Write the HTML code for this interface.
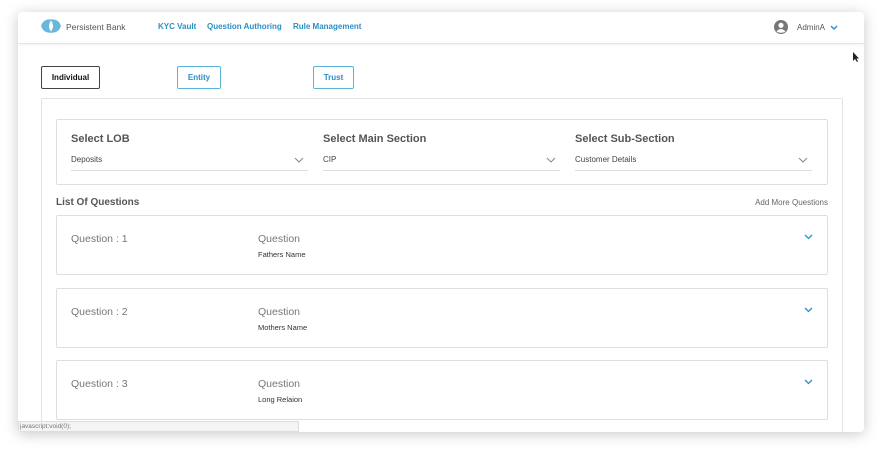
<!DOCTYPE html>
<html><head><meta charset="utf-8"><style>
*{box-sizing:border-box;margin:0;padding:0}
body{width:882px;height:456px;background:#fff;font-family:"Liberation Sans",Arial,sans-serif;position:relative;overflow:hidden}
.win{position:absolute;left:18px;top:12px;width:846px;height:420px;background:#fff;box-shadow:0 2px 14px rgba(0,0,0,.22);border-radius:4px;overflow:hidden}
.hdr{position:absolute;left:0;top:0;width:846px;height:32px;border-bottom:1px solid #e6e6e6;box-shadow:0 1px 3px rgba(0,0,0,.06)}
.a{position:absolute;white-space:nowrap}
.nav{color:#2a8fc4;font-weight:bold;font-size:8px;top:10px}
.tab{position:absolute;top:54px;height:23px;border:1px solid #5ab4d9;border-radius:2px;color:#2a8fc4;font-weight:bold;font-size:8px;text-align:center;line-height:21px}
.box{position:absolute;border:1px solid #dedede;border-radius:2px;background:#fff}
.lbl{font-size:11px;font-weight:bold;color:#555;top:13px}
.sel{position:absolute;top:35px;height:16px;border-bottom:1px solid #ddd;font-size:8px;color:#444}
.chev{position:absolute;right:4px;top:2px}
.q{font-size:10.5px;color:#777;top:17px}
.qt{font-size:10.5px;color:#777;top:17px;left:201px}
.qs{font-size:7.5px;color:#333;top:34px;left:201px}
</style></head><body>
<div class="win">
 <div class="hdr">
  <svg class="a" style="left:22px;top:6px" width="22" height="16" viewBox="0 0 22 16"><path d="M1 8 Q3 2 8 1.5 Q11 1 14 1.5 Q19 2 21 8 Q19 14 14 14.5 Q11 15 8 14.5 Q3 14 1 8Z" fill="#6ab7dc"/><path d="M11 2.5 Q15 8 11 13.5 Q7 8 11 2.5Z" fill="#fff"/></svg>
  <div class="a" style="left:48px;top:10px;font-size:8.5px;color:#555">Persistent Bank</div>
  <div class="a nav" style="left:140px">KYC Vault</div>
  <div class="a nav" style="left:189px">Question Authoring</div>
  <div class="a nav" style="left:275px">Rule Management</div>
  <svg class="a" style="left:756px;top:8px" width="14" height="14" viewBox="0 0 14 14"><circle cx="7" cy="7" r="7" fill="#777"/><circle cx="7" cy="5.3" r="2.6" fill="#fff"/><path d="M2.5 11.5 Q7 6.5 11.5 11.5 Q7 14 2.5 11.5Z" fill="#fff"/></svg>
  <div class="a" style="left:779px;top:11px;font-size:8px;color:#555">AdminA</div>
  <svg class="a" style="left:812px;top:13px" width="8" height="5" viewBox="0 0 8 5"><path d="M1 1 L4 4 L7 1" stroke="#2a8fc4" stroke-width="1.4" fill="none"/></svg>
 </div>
 <div class="tab" style="left:23px;width:59px;border-color:#444;color:#111">Individual</div>
 <div class="tab" style="left:159px;width:44px">Entity</div>
 <div class="tab" style="left:295px;width:41px">Trust</div>
 <div class="box" style="left:23px;top:86px;width:802px;height:340px;border-color:#e2e2e2">
  <div class="box" style="left:14px;top:20px;width:772px;height:66px">
   <div class="a lbl" style="left:14px">Select LOB</div>
   <div class="sel" style="left:14px;width:237px">Deposits<svg class="chev" width="10" height="6" viewBox="0 0 10 6"><path d="M1 1 L5 5 L9 1" stroke="#888" fill="none"/></svg></div>
   <div class="a lbl" style="left:266px">Select Main Section</div>
   <div class="sel" style="left:266px;width:237px">CIP<svg class="chev" width="10" height="6" viewBox="0 0 10 6"><path d="M1 1 L5 5 L9 1" stroke="#888" fill="none"/></svg></div>
   <div class="a lbl" style="left:518px">Select Sub-Section</div>
   <div class="sel" style="left:518px;width:237px">Customer Details<svg class="chev" width="10" height="6" viewBox="0 0 10 6"><path d="M1 1 L5 5 L9 1" stroke="#888" fill="none"/></svg></div>
  </div>
  <div class="a" style="left:14px;top:98px;font-size:10px;font-weight:bold;color:#555">List Of Questions</div>
  <div class="a" style="right:14px;top:99px;font-size:8px;color:#666">Add More Questions</div>
  <div class="box" style="left:14px;top:116px;width:772px;height:60px">
   <div class="a q" style="left:14px">Question : 1</div><div class="a qt">Question</div><div class="a qs">Fathers Name</div>
   <svg class="a" style="left:747px;top:18px" width="9" height="6" viewBox="0 0 9 6"><path d="M1 1 L4.5 4.5 L8 1" stroke="#2a8fc4" stroke-width="1.3" fill="none"/></svg>
  </div>
  <div class="box" style="left:14px;top:189px;width:772px;height:60px">
   <div class="a q" style="left:14px">Question : 2</div><div class="a qt">Question</div><div class="a qs">Mothers Name</div>
   <svg class="a" style="left:747px;top:18px" width="9" height="6" viewBox="0 0 9 6"><path d="M1 1 L4.5 4.5 L8 1" stroke="#2a8fc4" stroke-width="1.3" fill="none"/></svg>
  </div>
  <div class="box" style="left:14px;top:261px;width:772px;height:60px">
   <div class="a q" style="left:14px">Question : 3</div><div class="a qt">Question</div><div class="a qs">Long Relaion</div>
   <svg class="a" style="left:747px;top:18px" width="9" height="6" viewBox="0 0 9 6"><path d="M1 1 L4.5 4.5 L8 1" stroke="#2a8fc4" stroke-width="1.3" fill="none"/></svg>
  </div>
 </div>
 <div class="a" style="left:0;top:409px;width:281px;height:11px;background:#f4f4f4;border:1px solid #ddd;font-size:6.5px;color:#777;line-height:9px;padding-left:1px">javascript:void(0);</div>
</div>
<svg class="a" style="left:852px;top:51px" width="8" height="12" viewBox="0 0 8 12"><path d="M1 1 L1 10 L3 8 L5 11 L6 10.5 L4.5 7.5 L7 7.5Z" fill="#222"/></svg>
</body></html>
